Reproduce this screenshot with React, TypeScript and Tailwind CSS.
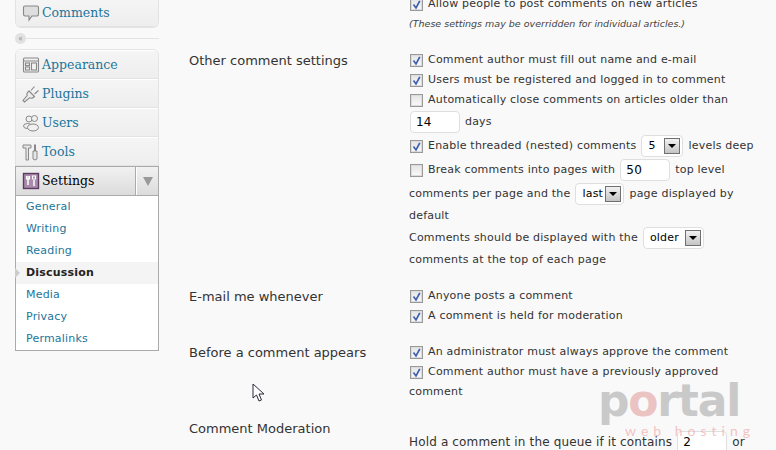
import React from "react"

const serif = "font-['DejaVu_Serif',serif]"
const sans = "font-['DejaVu_Sans',sans-serif]"

function Check({ on = true }: { on?: boolean }) {
  return (
    <span className="relative inline-block w-[13px] h-[13px] mr-[5px] ml-[1px] shrink-0 border border-[#999] bg-gradient-to-b from-[#e4e4e4] to-[#fafafa] shadow-[inset_0_0_0_1px_#dcdcdc]">
      {on && (
        <svg viewBox="0 0 11 11" className="absolute inset-0 w-[11px] h-[11px]">
          <path d="M2.5 5.5 L5 9 L8.8 1.8" fill="none" stroke="#3f5fb0" strokeWidth="1.7" />
        </svg>
      )}
    </span>
  )
}

function Input({ value, w = "w-[50px]" }: { value: string; w?: string }) {
  return (
    <span className={`inline-flex items-center h-[22px] ${w} px-[5px] mx-[5px] first:ml-[1px] bg-white border border-[#dfdfdf] rounded-[4px] text-[12px] text-black`}>
      {value}
    </span>
  )
}

function Select({ value, w }: { value: string; w: string }) {
  return (
    <span className={`inline-flex items-center justify-between h-[22px] ${w} pl-[6px] pr-[2px] mx-[5px] bg-white border border-[#dfdfdf] rounded-[4px] text-[11px] text-black`}>
      {value}
      <span className="flex items-center justify-center w-[16px] h-[16px] border border-[#707070] bg-gradient-to-b from-[#f2f2f2] to-[#c4c4c4]">
        <span className="w-0 h-0 border-x-[4px] border-x-transparent border-t-[4px] border-t-black" />
      </span>
    </span>
  )
}

function Line({ h = "h-[20px]", children }: { h?: string; children: React.ReactNode }) {
  return <div className={`flex items-center whitespace-nowrap ${h}`}>{children}</div>
}

function MenuItem({ icon, label }: { icon: React.ReactNode; label: string }) {
  return (
    <div className="flex items-center h-[29px] border-b border-b-[#e3e3e3] border-t border-t-white bg-gradient-to-b from-[#f5f5f5] to-[#eeeeee]">
      <span className="w-[26px] flex justify-center">{icon}</span>
      <span className={`${serif} text-[12.5px] pt-[2px] text-[#21759b]`}>{label}</span>
    </div>
  )
}

const iconCls = "w-[18px] h-[18px] ml-[4px]"

const ic = {
  comments: (
    <svg viewBox="0 0 18 18" className={iconCls} fill="#dedede" stroke="#888" strokeWidth="1.1">
      <path d="M3 2 H15 Q16.5 2 16.5 3.5 V10 Q16.5 12 15 12 H10 L7 16 V12 H3 Q1.5 12 1.5 10 V3.5 Q1.5 2 3 2 Z" />
    </svg>
  ),
  appearance: (
    <svg viewBox="0 0 18 18" className={iconCls} fill="none" stroke="#888" strokeWidth="1.1">
      <rect x="1.5" y="2" width="15" height="14" rx="1" fill="#f2f2f2" />
      <path d="M1.5 5 H16.5" />
      <rect x="3.5" y="7" width="4" height="2.5" />
      <rect x="3.5" y="11" width="4" height="3" />
      <rect x="9.5" y="7" width="5" height="7" />
    </svg>
  ),
  plugins: (
    <svg viewBox="0 0 18 18" className={iconCls} fill="#ececec" stroke="#888" strokeWidth="1.1">
      <path d="M7 6 L12.5 11.5 Q10 14 7.5 12.8 L2.5 17 L1 15.5 L5.2 10.5 Q4 8.5 7 6 Z" />
      <path d="M9 5.5 L12.5 1.5 M12.5 9 L16.5 5.5" />
    </svg>
  ),
  users: (
    <svg viewBox="0 0 18 18" className={iconCls} fill="#f0f0f0" stroke="#888" strokeWidth="1">
      <circle cx="7" cy="5" r="3" />
      <circle cx="12.5" cy="4.5" r="3" />
      <ellipse cx="5.5" cy="12" rx="4" ry="2.5" />
      <ellipse cx="11" cy="13.5" rx="5.5" ry="3.5" />
    </svg>
  ),
  tools: (
    <svg viewBox="0 0 18 18" className={iconCls} fill="#e6e6e6" stroke="#888" strokeWidth="1">
      <path d="M1 2 H9 V5 H6.5 V17 H4 V5 H1 Z" />
      <path d="M11 8 H15 V16 Q13 18 11 16 Z" />
      <path d="M13 1.5 V8" strokeWidth="2" />
    </svg>
  ),
  settings: (
    <svg viewBox="0 0 18 18" className={iconCls}>
      <rect x="1.5" y="1.5" width="15" height="15" fill="#a88bab" stroke="#5c3a62" strokeWidth="1.4" />
      <path d="M6 4 V13 M12 8 V14" stroke="#fff" strokeWidth="1.5" />
      <path d="M4.5 4 V7 H7.5 V4 M10.5 4 H13.5 V7 H10.5 Z" fill="none" stroke="#fff" strokeWidth="1.1" />
    </svg>
  ),
}

function Sidebar() {
  const subs = ["General", "Writing", "Reading", "Discussion", "Media", "Privacy", "Permalinks"]
  return (
    <aside className="w-[144px] ml-[15px] shrink-0 -mt-[2px]">
      <div className="border border-[#e3e3e3] border-t-0 rounded-b-[6px] overflow-hidden">
        <MenuItem icon={ic.comments} label="Comments" />
      </div>
      <div className="flex items-center h-[20px]">
        <span className="flex items-center justify-center w-[11px] h-[11px] rounded-full bg-[#e2e2e2] text-[#999] text-[8px] leading-none">«</span>
        <span className="flex-1 h-px bg-[#e3e3e3]" />
      </div>
      <div className="mt-[1px] border border-[#e3e3e3] rounded-t-[6px] overflow-hidden">
        <MenuItem icon={ic.appearance} label="Appearance" />
        <MenuItem icon={ic.plugins} label="Plugins" />
        <MenuItem icon={ic.users} label="Users" />
        <MenuItem icon={ic.tools} label="Tools" />
      </div>
      <div className="flex h-[30px] -mt-px relative border border-[#aaa] bg-gradient-to-b from-[#f1f1f1] to-[#dcdcdc]">
        <div className="flex items-center flex-1 border-r border-r-[#aaa]">
          <span className="w-[26px] flex justify-center">{ic.settings}</span>
          <span className={`${serif} text-[12.5px] text-black`}>Settings</span>
        </div>
        <div className="flex items-center justify-center w-[22px] border-l border-l-white">
          <span className="w-0 h-0 border-x-[5px] border-x-transparent border-t-[9px] border-t-[#999]" />
        </div>
      </div>
      <ul className={`${sans} text-[11px] tracking-[0.2px] border border-t-0 border-[#aaa] bg-white relative`}>
        {subs.map(s =>
          s === "Discussion" ? (
            <li key={s} className="flex items-center h-[22px] pl-[10px] bg-[#f4f4f4] font-bold text-[#222] relative">
              <span className="absolute -left-px w-0 h-0 border-y-[5px] border-y-transparent border-l-[5px] border-l-[#ccc]" />
              {s}
            </li>
          ) : (
            <li key={s} className="flex items-center h-[22px] pl-[10px] text-[#21759b]">{s}</li>
          )
        )}
      </ul>
    </aside>
  )
}

function Row({ label, top, children }: { label: string; top: string; children: React.ReactNode }) {
  return (
    <div className="flex">
      <div className={`w-[220px] shrink-0 text-[13px] tracking-normal ${top}`}>{label}</div>
      <div className="flex-1">{children}</div>
    </div>
  )
}

function Settings() {
  return (
    <main className={`${sans} flex-1 ml-[30px] -mt-[6px] text-[11px] tracking-[0.2px] text-[#333]`}>
      <Row label="" top="">
        <Line><Check />Allow people to post comments on new articles</Line>
        <Line><em className="text-[9.5px] tracking-normal text-[#444]">(These settings may be overridden for individual articles.)</em></Line>
      </Row>
      <div className="h-[16px]" />
      <Row label="Other comment settings" top="pt-[1px]">
        <Line><Check />Comment author must fill out name and e-mail</Line>
        <Line><Check />Users must be registered and logged in to comment</Line>
        <Line><Check on={false} />Automatically close comments on articles older than</Line>
        <Line h="h-[24px]"><Input value="14" />days</Line>
        <Line h="h-[24px]"><Check />Enable threaded (nested) comments<Select value="5" w="w-[42px]" />levels deep</Line>
        <Line h="h-[24px]"><Check on={false} />Break comments into pages with<Input value="50" />top level</Line>
        <Line h="h-[24px]">comments per page and the<Select value="last" w="w-[49px]" />page displayed by</Line>
        <Line h="h-[20px]">default</Line>
        <Line h="h-[24px]">Comments should be displayed with the<Select value="older" w="w-[61px]" /></Line>
        <Line h="h-[20px]">comments at the top of each page</Line>
      </Row>
      <div className="h-[16px]" />
      <Row label="E-mail me whenever" top="pt-[1px]">
        <Line><Check />Anyone posts a comment</Line>
        <Line><Check />A comment is held for moderation</Line>
      </Row>
      <div className="h-[16px]" />
      <Row label="Before a comment appears" top="pt-[1px]">
        <Line><Check />An administrator must always approve the comment</Line>
        <Line><Check />Comment author must have a previously approved</Line>
        <Line>comment</Line>
      </Row>
      <div className="h-[16px]" />
      <Row label="Comment Moderation" top="pt-[1px]">
        <div className="h-[12px]" />
        <Line h="h-[24px]"><span className="text-[12px] tracking-[0.15px]">Hold a comment in the queue if it contains</span><Input value="2" /><span className="text-[12px]">or</span></Line>
      </Row>
    </main>
  )
}

export default function App() {
  return (
    <div className="relative flex w-[776px] h-[450px] overflow-hidden bg-[#f9f9f9]">
      <Sidebar />
      <Settings />

      {/* watermark */}
      <div className="absolute left-[598px] top-[379px] w-[160px] pointer-events-none select-none">
        <div className={`${sans} font-bold text-[44px] leading-[44px] tracking-[-1.2px] text-[#aaaaaa] opacity-60`}>
          p<span className="text-[#e2a0a0]">o</span>rtal
        </div>
        <div className="font-['Lato',sans-serif] text-[14px] leading-[14px] tracking-[5px] text-[#f0a0a0] opacity-60 pl-[27px] mt-[1px] whitespace-nowrap">web hosting</div>
      </div>

      {/* cursor */}
      <svg viewBox="0 0 14 20" className="absolute left-[252px] top-[383px] w-[14px] h-[20px]">
        <path d="M1 1 V15 L4.5 12 L7 18 L9.5 17 L7 11 H12 Z" fill="#fff" stroke="#2a2a3a" strokeWidth="1" />
      </svg>
    </div>
  )
}
